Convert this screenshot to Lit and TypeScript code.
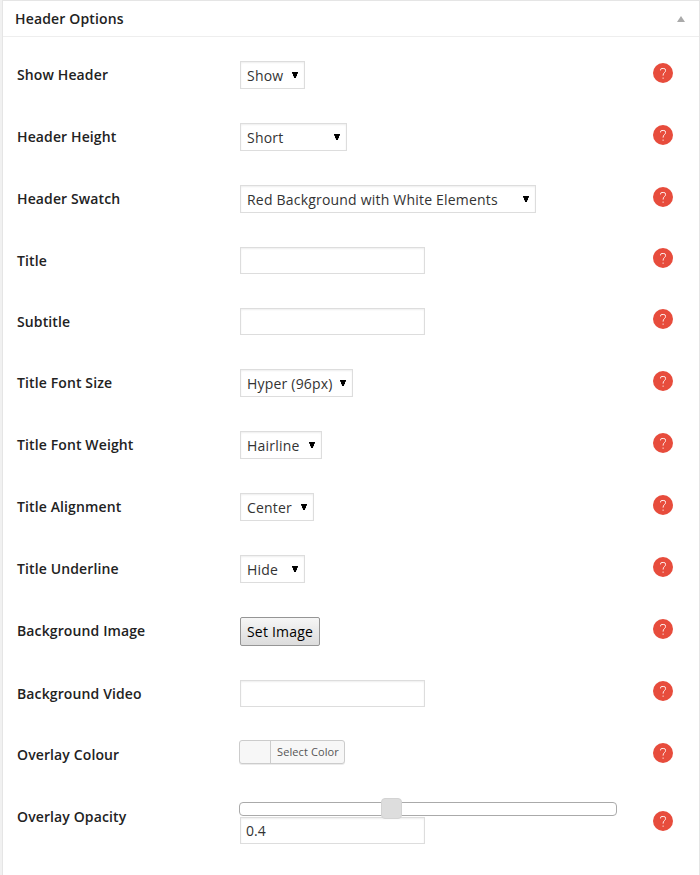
import { LitElement, html, css } from "lit";
import { customElement, property } from "lit/decorators.js";
import { styleMap } from "lit/directives/style-map.js";

type Kind = "select" | "text" | "button" | "color" | "slider";

interface Option {
  label: string;
  kind: Kind;
  value?: string;
  width?: number;
}

const OPTIONS: Option[] = [
  { label: "Show Header", kind: "select", value: "Show", width: 65 },
  { label: "Header Height", kind: "select", value: "Short", width: 107 },
  { label: "Header Swatch", kind: "select", value: "Red Background with White Elements", width: 296 },
  { label: "Title", kind: "text" },
  { label: "Subtitle", kind: "text" },
  { label: "Title Font Size", kind: "select", value: "Hyper (96px)", width: 113 },
  { label: "Title Font Weight", kind: "select", value: "Hairline", width: 82 },
  { label: "Title Alignment", kind: "select", value: "Center", width: 74 },
  { label: "Title Underline", kind: "select", value: "Hide", width: 65 },
  { label: "Background Image", kind: "button", value: "Set Image" },
  { label: "Background Video", kind: "text" },
  { label: "Overlay Colour", kind: "color", value: "Select Color" },
  { label: "Overlay Opacity", kind: "slider", value: "0.4" },
];

@customElement("option-row")
class OptionRow extends LitElement {
  @property({ attribute: false }) option!: Option;

  static styles = css`
    :host { display: block; }
    .row {
      display: grid;
      grid-template-columns: 223px 413px 20px;
      align-items: start;
      height: 62px;
      padding-left: 14px;
      box-sizing: border-box;
    }
    .row-text { height: 61px; }
    .row-button { height: 63px; }
    .label {
      margin-top: 21px;
      font-weight: 600;
      line-height: 20px;
      letter-spacing: 0.12px;
      color: #222;
      white-space: nowrap;
    }
    .control { padding-top: 17px; }
    .help { display: block; margin-top: 19px; }
    .row-text .help { margin-top: 18px; }
    .row-color .control, .row-slider .control { padding-top: 16px; }
    .row-slider .help { margin-top: 25px; }
    .box {
      box-sizing: border-box;
      border: 1px solid #ddd;
      background: #fff;
      box-shadow: inset 0 1px 2px rgba(0, 0, 0, 0.07);
      color: #333;
      white-space: nowrap;
    }
    .select {
      display: flex;
      justify-content: space-between;
      height: 28px;
      padding: 0 6px;
      line-height: 27px;
      letter-spacing: 0.2px;
    }
    .arrow { margin-top: 9px; }
    .input {
      width: 185px;
      height: 27px;
      padding: 0 5px;
      line-height: 26px;
    }
    .push {
      display: block;
      box-sizing: border-box;
      width: 80px;
      height: 29px;
      padding: 0;
      border: 1px solid #959595;
      border-radius: 2px;
      background: linear-gradient(#f6f6f6, #dcdcdc);
      font: inherit;
      line-height: 27px;
      letter-spacing: 0.2px;
      color: #000;
      white-space: nowrap;
    }
    .picker {
      display: flex;
      box-sizing: border-box;
      width: 106px;
      height: 24px;
      margin-left: -1px;
      border: 1px solid #ccc;
      border-radius: 3px;
      background: #f7f7f7;
      box-shadow: 0 1px 0 rgba(0, 0, 0, 0.08);
    }
    .picker-text {
      margin-left: 30px;
      border-left: 1px solid #ccc;
      padding-left: 6px;
      font-size: 11px;
      line-height: 22px;
      letter-spacing: 0.1px;
      color: #555;
      white-space: nowrap;
    }
    .track {
      position: relative;
      box-sizing: border-box;
      width: 378px;
      height: 14px;
      margin: 0 0 1px -1px;
      border: 1px solid #aaa;
      border-radius: 4px;
      background: #fff;
    }
    .thumb {
      position: absolute;
      top: -5px;
      box-sizing: border-box;
      width: 21px;
      height: 21px;
      margin-left: -9px;
      border: 1px solid #d3d3d3;
      border-radius: 4px;
      background: #ddd;
    }
  `;

  private control() {
    const o = this.option;
    switch (o.kind) {
      case "select":
        return html`<div class="box select" style=${styleMap({ width: `${o.width}px` })}>
          <span>${o.value}</span>
          <svg class="arrow" width="6" height="8" viewBox="0 0 6 8"><path d="M0 1H6V2.5L5 3V5L4 5.5V7H2V5.5L1 5V3L0 2.5Z" fill="#000" /></svg>
        </div>`;
      case "text":
        return html`<div class="box input"></div>`;
      case "button":
        return html`<button class="push">${o.value}</button>`;
      case "color":
        return html`<div class="picker"><span class="picker-text">${o.value}</span></div>`;
      case "slider":
        return html`<div class="track">
            <div class="thumb" style=${styleMap({ left: `${Number(o.value) * 100}%` })}></div>
          </div>
          <div class="box input">${o.value}</div>`;
    }
  }

  render() {
    return html`<div class="row row-${this.option.kind}">
      <div class="label">${this.option.label}</div>
      <div class="control">${this.control()}</div>
      <svg class="help" width="20" height="20" viewBox="0 0 20 20">
        <circle cx="10" cy="10" r="10" fill="#e74c3c" />
        <path d="M7.5 7.4V6.9Q7.5 5.5 9 5.5H10.8Q12.5 5.5 12.5 7V7.7Q12.5 8.8 11.5 9.5Q10.1 10.5 10.1 12.6" fill="none" stroke="#fff" stroke-width="0.9" />
        <rect x="9.6" y="14.6" width="1" height="1.1" fill="#fff" />
      </svg>
    </div>`;
  }
}

@customElement("app-root")
class AppRoot extends LitElement {
  static styles = css`
    :host {
      display: block;
      height: 875px;
      overflow: hidden;
      padding-left: 2px;
      background: #f1f1f1;
      box-sizing: border-box;
      font-family: "Open Sans", "Noto Sans", sans-serif;
      font-size: 14px;
    }
    .panel {
      box-sizing: border-box;
      height: 880px;
      border: 1px solid #e5e5e5;
      background: #fff;
    }
    .head {
      display: flex;
      justify-content: space-between;
      box-sizing: border-box;
      height: 36px;
      padding: 0 14px 0 12px;
      border-bottom: 1px solid #eee;
    }
    .title {
      font-weight: 600;
      line-height: 35px;
      letter-spacing: 0.16px;
      color: #222;
    }
    .toggle { margin-top: 15px; }
    .rows { padding-top: 7px; }
  `;

  render() {
    return html`<div class="panel">
      <div class="head">
        <span class="title">Header Options</span>
        <svg class="toggle" width="8" height="6" viewBox="0 0 8 6"><path d="M4 0L8 6H0Z" fill="#aaa" /></svg>
      </div>
      <div class="rows">${OPTIONS.map((o) => html`<option-row .option=${o}></option-row>`)}</div>
    </div>`;
  }
}
